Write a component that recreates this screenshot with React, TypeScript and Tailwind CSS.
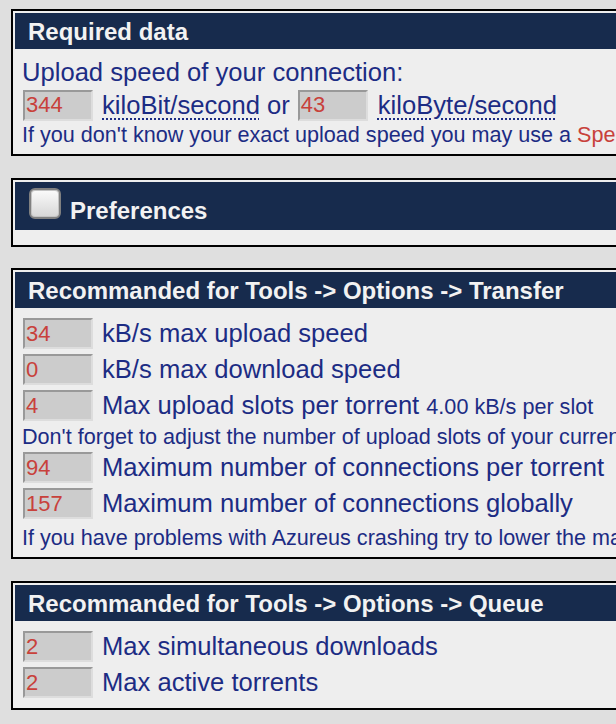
const NAVY = 'text-[#1c2c84]'

function Field({ value }: { value: string }) {
  return (
    <div className="w-[70px] h-[31px] shrink-0 flex items-center pl-px bg-[#cccccc] border-2 border-t-[#999999] border-l-[#999999] border-b-[#dddddd] border-r-[#dddddd] text-[22px] leading-none text-[#c8413b]">
      {value}
    </div>
  )
}

function Header({ children }: { children: React.ReactNode }) {
  return (
    <div className="h-[36px] flex items-center pl-[13px] pt-px bg-[#172b4d] text-[#f2f2f2] font-bold text-[24px] leading-none">
      {children}
    </div>
  )
}

function Box({ children, className = '' }: { children: React.ReactNode; className?: string }) {
  return (
    <div className={`w-[900px] border-2 border-black p-[2px] bg-[#eeeeee] ${className}`}>{children}</div>
  )
}

function Row({ value, children }: { value: string; children: React.ReactNode }) {
  return (
    <div className="mt-[5px] h-[31px] flex items-center pl-px">
      <Field value={value} />
      <span className="ml-[9px] text-[25.6px]">{children}</span>
    </div>
  )
}

export default function App() {
  return (
    <div
      className={`w-[616px] h-[724px] overflow-hidden bg-[#dfdfdf] pt-[9px] pl-[11px] whitespace-nowrap ${NAVY}`}
      style={{ fontFamily: '"Liberation Sans", Arial, sans-serif' }}
    >
      <Box className="mb-[22px]">
        <Header>Required data</Header>
        <div className="px-[7px] pt-[9px] pb-[6px]">
          <div className="text-[25.6px] leading-[29px]">Upload speed of your connection:</div>
          <div className="mt-[2px] h-[32px] flex items-center pl-px text-[25.6px]">
            <Field value="344" />
            <span className="ml-[9px] underline decoration-dotted decoration-2 underline-offset-[5px]">
              kiloBit/second
            </span>
            <span className="mr-[8px]">&nbsp;or</span>
            <Field value="43" />
            <span className="ml-[10px] underline decoration-dotted decoration-2 underline-offset-[5px]">
              kiloByte/second
            </span>
          </div>
          <div className="h-[25px] text-[21.6px] leading-[28px]">
            If you don't know your exact upload speed you may use a{' '}
            <span className="text-[#c8413b]">Speed test</span>
          </div>
        </div>
      </Box>

      <Box className="mb-[21px]">
        <div className="h-[48px] flex items-baseline pl-[14px] pt-[6px] bg-[#172b4d] text-[#f2f2f2] font-bold text-[24px] leading-none">
          <div className="w-[32px] h-[31px] rounded-[6px] border-2 border-[#808080] bg-linear-to-b from-[#fbfbfb] to-[#d6d6d6] shadow-[inset_0_0_0_1px_#c4c4c4]" />
          <span className="ml-[9px]">Preferences</span>
        </div>
        <div className="h-[13px]" />
      </Box>

      <Box className="mb-[22px]">
        <Header>Recommanded for Tools -&gt; Options -&gt; Transfer</Header>
        <div className="px-[7px] pt-[5px] pb-[7px]">
          <Row value="34">kB/s max upload speed</Row>
          <Row value="0">kB/s max download speed</Row>
          <Row value="4">
            Max upload slots per torrent <span className="text-[21.6px]">4.00 kB/s per slot</span>
          </Row>
          <div className="h-[26px] text-[21.6px] leading-[32px]">
            Don't forget to adjust the number of upload slots of your current torrents
          </div>
          <Row value="94">Maximum number of connections per torrent</Row>
          <Row value="157">Maximum number of connections globally</Row>
          <div className="mt-[4px] h-[25px] text-[21.6px] leading-[29px]">
            If you have problems with Azureus crashing try to lower the max connections
          </div>
        </div>
      </Box>

      <Box>
        <Header>Recommanded for Tools -&gt; Options -&gt; Queue</Header>
        <div className="px-[7px] pt-[5px] pb-[8px]">
          <Row value="2">Max simultaneous downloads</Row>
          <Row value="2">Max active torrents</Row>
        </div>
      </Box>
    </div>
  )
}
